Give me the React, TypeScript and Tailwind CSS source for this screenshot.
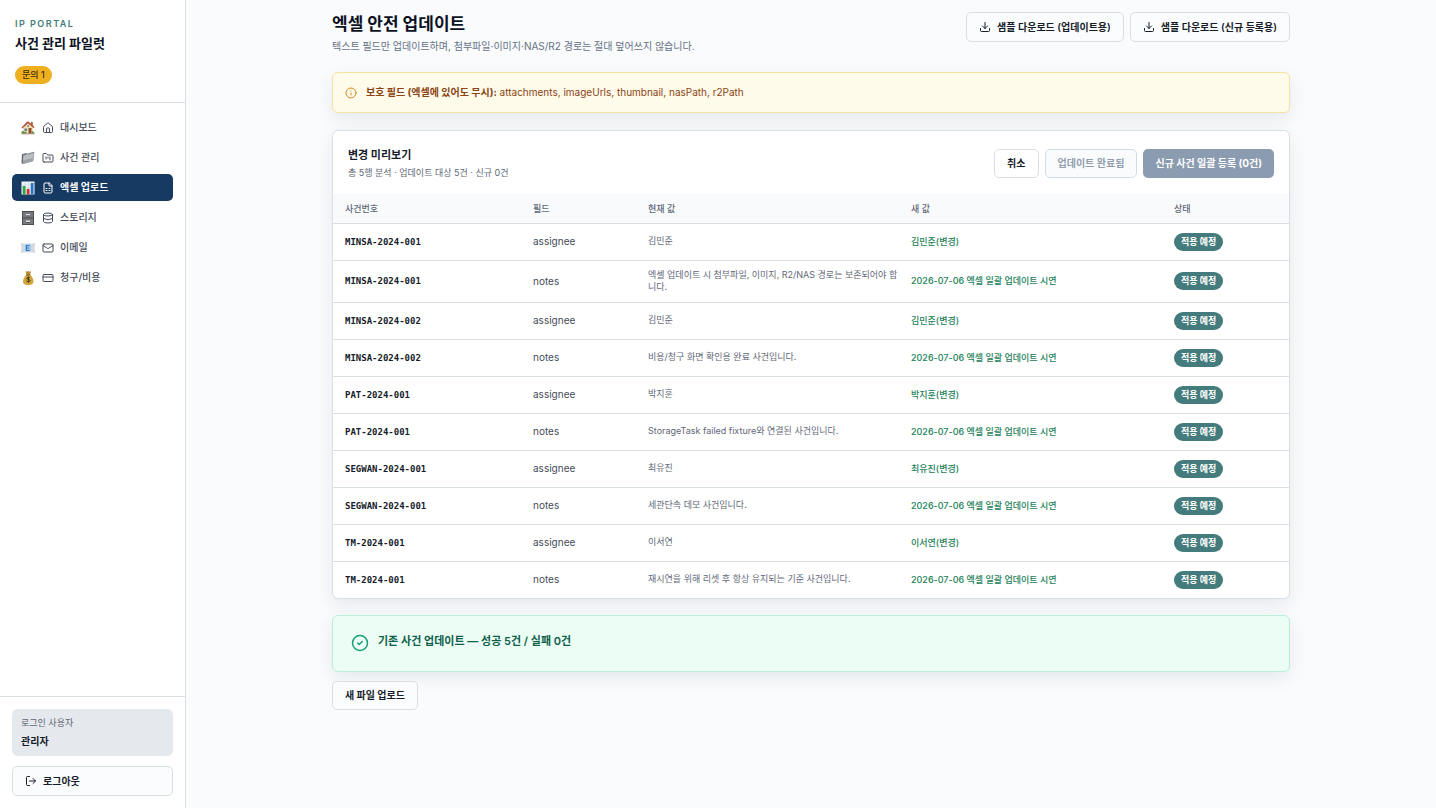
import React from "react";
import {
  House,
  FolderKanban,
  FileSpreadsheet,
  Database,
  Mail,
  CreditCard,
  LogOut,
  Download,
  Info,
  CircleCheck,
  type LucideIcon,
} from "lucide-react";

function HouseEmoji() {
  return (
    <svg viewBox="0 0 28 28" className="size-[14px]" aria-hidden="true">
      <path d="M20 2h3.500v9H20z" fill="#9a5a45" />
      <path d="M4 12 13 5l11 7v13H4z" fill="#f2dfb4" />
      <path d="M1 13 12 1.500c1-1 2.500-1 3.500 0L27 12l-1.500 2.500L14 5 2.500 15z" fill="#b5533c" />
      <path d="M7 15h5v5H7z" fill="#5b7f9c" />
      <path d="M15 14h6v11h-6z" fill="#8d4f2e" />
      <circle cx="14" cy="10" r="2" fill="#6c8ba3" />
      <path d="M1 22c2-3 5-2 6 0 2-1 4 0 5 3H1zM21 22c2-2 5-1 6 3h-6z" fill="#5e9141" />
      <path d="M1 25h26v1.500H1z" fill="#8b7355" />
    </svg>
  );
}

function FolderEmoji() {
  return (
    <svg viewBox="0 0 28 28" className="size-[14px]" aria-hidden="true">
      <path d="M2 6.500 10 4l2 1.500L26 1.500 24 20 3 26z" fill="#6f7479" />
      <path d="M4 8.500 27 2.500 24.500 20.500 3 26z" fill="#9da2a7" />
      <path d="M5 10 25.500 4.500 24 14 4.500 19z" fill="#b9bec2" />
      <path d="M2 6.500 4 8.500 3 26 1 24z" fill="#565b60" />
    </svg>
  );
}

function ChartEmoji() {
  return (
    <svg viewBox="0 0 28 28" className="size-[14px]" aria-hidden="true">
      <path d="M1 1h26v26H1z" fill="#eef4f8" />
      <path d="M1 8h26M1 14h26M1 20h26M8 1v26M15 1v26M22 1v26" stroke="#bccbd8" strokeWidth="1" />
      <path d="M3.500 10h5.500v17H3.500z" fill="#2ba745" />
      <path d="M11.500 16h5.500v11h-5.500z" fill="#d13230" />
      <path d="M19.500 4H25v23h-5.500z" fill="#2774c9" />
    </svg>
  );
}

function CabinetEmoji() {
  return (
    <svg viewBox="0 0 28 28" className="size-[14px]" aria-hidden="true">
      <path d="M2 0h24v28H2z" fill="#4b4d50" />
      <path d="M4 2h20v11H4zM4 15h20v11H4z" fill="#77797c" />
      <path d="M10 6h8v3h-8zM10 19h8v3h-8z" fill="#e2e3e4" />
      <path d="M11 9h6v1.500h-6zM11 22h6v1.500h-6z" fill="#3d3f42" />
    </svg>
  );
}

function EmailEmoji() {
  return (
    <svg viewBox="0 0 28 28" className="size-[14px]" aria-hidden="true">
      <path d="M0 5h28v18H0z" fill="#d9dee3" />
      <path d="m0 5 11 9L0 23M28 5l-11 9 11 9" fill="none" stroke="#b2bac2" strokeWidth="1.200" />
      <rect x="8" y="6" width="12" height="15" rx="2" fill="#a9cdf0" />
      <path d="M17 9h-6v10h6.500M11 14h5.500" fill="none" stroke="#2b78c5" strokeWidth="2.400" />
    </svg>
  );
}

function MoneyEmoji() {
  return (
    <svg viewBox="0 0 28 28" className="size-[14px]" aria-hidden="true">
      <path d="m9 0 3 1.500L14.500 0 17 1.500 20 0l-2 8h-7z" fill="#b68a2e" />
      <path d="M10.500 8h8C23 12 25 17 25 21c0 4-3 7-10.500 7S4 25 4 21c0-4 2-9 6.500-13z" fill="#d3a63c" />
      <path d="M10 7h9v2h-9z" fill="#7f5c20" />
      <path
        d="M18 14c-1-1.500-6.500-2-6.500.7 0 3 6.700 1.500 6.700 4.500 0 2.800-6 2.500-7.200.6M14.700 11v12.500"
        fill="none"
        stroke="#3b2c10"
        strokeWidth="1.800"
      />
    </svg>
  );
}

type NavItem = { label: string; Emoji: () => React.JSX.Element; Icon: LucideIcon; active?: boolean };

const NAV: NavItem[] = [
  { label: "대시보드", Emoji: HouseEmoji, Icon: House },
  { label: "사건 관리", Emoji: FolderEmoji, Icon: FolderKanban },
  { label: "엑셀 업로드", Emoji: ChartEmoji, Icon: FileSpreadsheet, active: true },
  { label: "스토리지", Emoji: CabinetEmoji, Icon: Database },
  { label: "이메일", Emoji: EmailEmoji, Icon: Mail },
  { label: "청구/비용", Emoji: MoneyEmoji, Icon: CreditCard },
];

const MEMO = "2026-07-06 엑셀 일괄 업데이트 시연";

const ROWS: [string, string, string, string][] = [
  ["MINSA-2024-001", "assignee", "김민준", "김민준(변경)"],
  ["MINSA-2024-001", "notes", "엑셀 업데이트 시 첨부파일, 이미지, R2/NAS 경로는 보존되어야 합니다.", MEMO],
  ["MINSA-2024-002", "assignee", "김민준", "김민준(변경)"],
  ["MINSA-2024-002", "notes", "비용/청구 화면 확인용 완료 사건입니다.", MEMO],
  ["PAT-2024-001", "assignee", "박지훈", "박지훈(변경)"],
  ["PAT-2024-001", "notes", "StorageTask failed fixture와 연결된 사건입니다.", MEMO],
  ["SEGWAN-2024-001", "assignee", "최유진", "최유진(변경)"],
  ["SEGWAN-2024-001", "notes", "세관단속 데모 사건입니다.", MEMO],
  ["TM-2024-001", "assignee", "이서연", "이서연(변경)"],
  ["TM-2024-001", "notes", "재시연을 위해 리셋 후 항상 유지되는 기준 사건입니다.", MEMO],
];

function Sidebar() {
  return (
    <aside className="flex w-[186px] shrink-0 flex-col border-r border-[#d9e0e4] bg-white">
      <div className="flex flex-col items-start border-b border-[#d9e0e4] px-[15px] py-[18px]">
        <p className="text-[9px] leading-3 font-semibold tracking-[1.5px] text-[#3f7d7b]">IP PORTAL</p>
        <p className="mt-1 text-[13px] leading-[18px] font-bold text-[#0c1222]">사건 관리 파일럿</p>
        <span className="mt-[14px] rounded-full bg-[#efb01f] px-[7px] text-[9px] leading-[18px] font-medium text-[#3d2c08]">
          문의 1
        </span>
      </div>
      <nav className="flex flex-1 flex-col gap-[3px] px-3 pt-[11px]">
        {NAV.map(({ label, Emoji, Icon, active }) => (
          <a
            key={label}
            href="#"
            aria-current={active ? "page" : undefined}
            className={
              active
                ? "flex h-[27px] items-center rounded-[5px] bg-[#173a63] px-[9px] text-[10px] font-bold text-white"
                : "flex h-[27px] items-center rounded-[5px] px-[9px] text-[10px] font-medium text-[#454c59]"
            }
          >
            <Emoji />
            <Icon className="ml-[7px] size-3" strokeWidth={2} aria-hidden="true" />
            <span className="ml-[6px]">{label}</span>
          </a>
        ))}
      </nav>
      <div className="border-t border-[#d9e0e4] p-3">
        <div className="rounded-[6px] bg-[#e5e8ec] px-[9px] py-[6px]">
          <p className="text-[9px] leading-4 text-[#5f6878]">로그인 사용자</p>
          <p className="mt-[2px] text-[10px] leading-[17px] font-bold text-[#161c2a]">관리자</p>
        </div>
        <button
          type="button"
          className="mt-[10px] flex h-[30px] w-full items-center gap-[6px] rounded-[5px] border border-[#d9e0e4] bg-[#fafcfd] px-3 text-[10px] font-bold text-[#161c2a]"
        >
          <LogOut className="size-3" aria-hidden="true" />
          로그아웃
        </button>
      </div>
    </aside>
  );
}

function DownloadButton({ children }: { children: React.ReactNode }) {
  return (
    <button
      type="button"
      className="flex h-[30px] items-center gap-[6px] rounded-[5px] border border-[#d9e0e4] bg-[#fafcfd] px-3 text-[10px] font-semibold text-[#161c2a]"
    >
      <Download className="size-3" aria-hidden="true" />
      {children}
    </button>
  );
}

export default function App() {
  return (
    <div className="flex min-h-screen bg-[#f9fbfd] font-['Inter','Noto_Sans_CJK_KR',sans-serif] text-[#161c2a]">
      <Sidebar />
      <main className="min-w-0 flex-1 px-6 pt-3 pb-6">
        <div className="mx-auto max-w-[958px]">
          <header className="flex items-start justify-between">
            <div>
              <h1 className="text-[17px] leading-6 font-bold text-[#0c1222]">엑셀 안전 업데이트</h1>
              <p className="mt-[2px] text-[10px] leading-4 text-[#667184]">
                텍스트 필드만 업데이트하며, 첨부파일·이미지·NAS/R2 경로는 절대 덮어쓰지 않습니다.
              </p>
            </div>
            <div className="flex gap-[6px]">
              <DownloadButton>샘플 다운로드 (업데이트용)</DownloadButton>
              <DownloadButton>샘플 다운로드 (신규 등록용)</DownloadButton>
            </div>
          </header>

          <div className="mt-[18px] flex h-[41px] items-center gap-[9px] rounded-[6px] border border-[#f4e3a0] bg-[#fffbeb] px-3 text-[10px] text-[#8a4312] shadow-[0_6px_18px_rgba(15,23,42,0.08)]">
            <Info className="size-3 text-[#d98a1c]" aria-hidden="true" />
            <p>
              <strong className="font-bold">보호 필드 (엑셀에 있어도 무시):</strong> attachments, imageUrls, thumbnail,
              nasPath, r2Path
            </p>
          </div>

          <section className="mt-[17px] overflow-hidden rounded-[6px] border border-[#d9e0e4] bg-white shadow-[0_6px_18px_rgba(15,23,42,0.08)]">
            <div className="flex items-center justify-between px-[15px] pt-[14px] pb-[13px]">
              <div>
                <h2 className="text-[11px] leading-5 font-bold">변경 미리보기</h2>
                <p className="text-[9px] leading-4 text-[#5f6878]">총 5행 분석 · 업데이트 대상 5건 · 신규 0건</p>
              </div>
              <div className="flex gap-[6px]">
                <button type="button" className="h-[29px] rounded-[5px] border border-[#d9e0e4] bg-white px-3 text-[10px] font-bold">
                  취소
                </button>
                <button
                  type="button"
                  disabled
                  className="h-[29px] rounded-[5px] border border-[#d3dce3] bg-[#f9fbfd] px-3 text-[10px] font-semibold text-[#929dad]"
                >
                  업데이트 완료됨
                </button>
                <button type="button" disabled className="h-[29px] rounded-[5px] bg-[#8b9cb1] px-3 text-[10px] font-bold text-white">
                  신규 사건 일괄 등록 (0건)
                </button>
              </div>
            </div>
            <table className="w-full table-fixed text-left">
              <colgroup>
                <col className="w-[188px]" />
                <col className="w-[115px]" />
                <col />
                <col />
                <col className="w-[127px]" />
              </colgroup>
              <thead className="bg-[#f8fafb] text-[9px] text-[#5f6878]">
                <tr className="h-[29px]">
                  {["사건번호", "필드", "현재 값", "새 값", "상태"].map((h) => (
                    <th key={h} scope="col" className="px-3 font-medium">
                      {h}
                    </th>
                  ))}
                </tr>
              </thead>
              <tbody>
                {ROWS.map(([id, field, before, after], i) => (
                  <tr key={i} className="border-t border-[#d9e0e4]">
                    <td className="px-3 font-['DejaVu_Sans_Mono',monospace] text-[9px] leading-3 font-bold">{id}</td>
                    <td className="px-3 text-[10px] text-[#454c59]">{field}</td>
                    <td className="pt-2 pb-[9px] pl-3 text-[9px] leading-3 break-all text-[#5f6878]">{before}</td>
                    <td className="px-3 text-[9px] leading-3 font-medium text-[#1c8159]">{after}</td>
                    <td className="px-3 py-[9px]">
                      <span className="block w-fit rounded-full bg-[#447b7c] px-[7px] text-[9px] leading-[18px] font-bold text-white">
                        적용 예정
                      </span>
                    </td>
                  </tr>
                ))}
              </tbody>
            </table>
          </section>

          <div className="mt-4 flex h-[57px] items-center gap-[9px] rounded-[6px] border border-[#b9efd8] bg-[#ebfdf5] px-[18px] text-[#0f5f4a] shadow-[0_6px_18px_rgba(15,23,42,0.08)]">
            <CircleCheck className="size-[18px] text-[#16a073]" aria-hidden="true" />
            <p className="pb-1 text-[11px] font-semibold">기존 사건 업데이트 — 성공 5건 / 실패 0건</p>
          </div>
          <button type="button" className="mt-[9px] h-[29px] rounded-[5px] border border-[#d9e0e4] bg-[#fafcfd] px-3 text-[10px] font-bold">
            새 파일 업로드
          </button>
        </div>
      </main>
    </div>
  );
}
